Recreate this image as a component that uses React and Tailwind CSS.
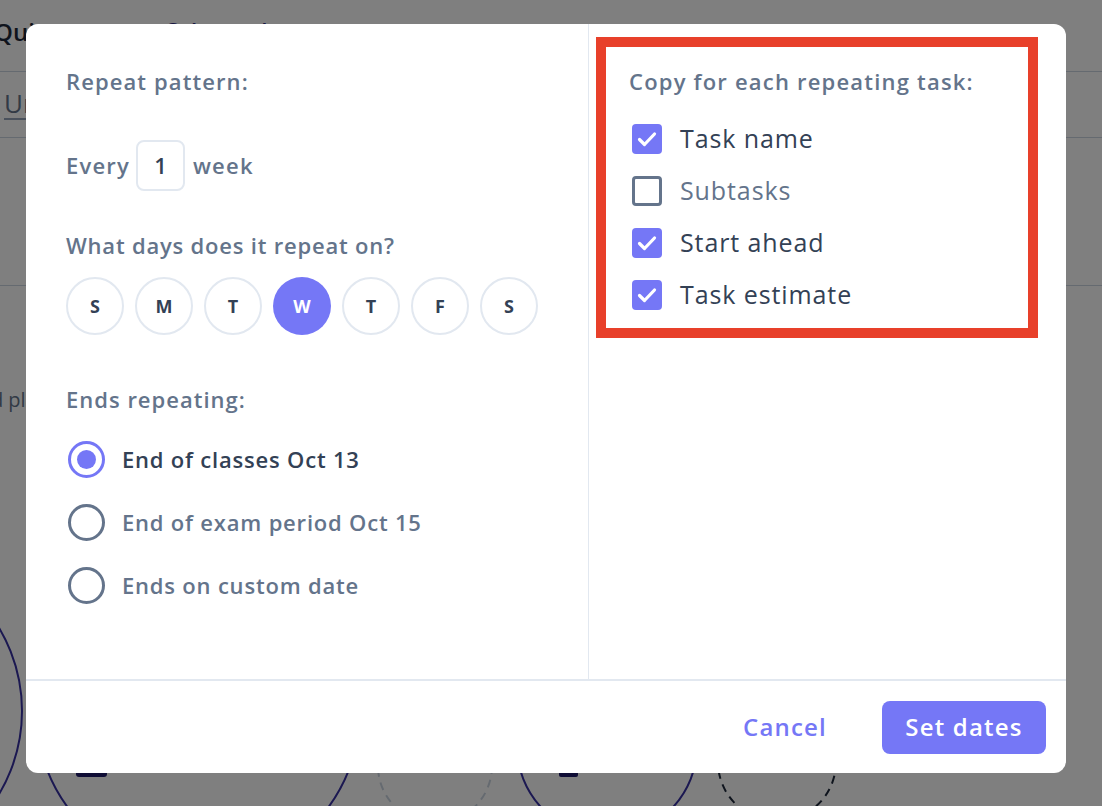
import { useState } from 'react';

const days = ['S', 'M', 'T', 'W', 'T', 'F', 'S'];

const endOptions = [
    { id: 'classes', label: 'End of classes Oct 13' },
    { id: 'exam', label: 'End of exam period Oct 15' },
    { id: 'custom', label: 'Ends on custom date' },
];

const copyOptions = [
    { id: 'name', label: 'Task name', checked: true },
    { id: 'subtasks', label: 'Subtasks', checked: false },
    { id: 'ahead', label: 'Start ahead', checked: true },
    { id: 'estimate', label: 'Task estimate', checked: true },
];

function BackgroundPage() {
    return (
        <div className="flex h-[806px] flex-col overflow-hidden bg-white text-[#1e293b]">
            <div className="flex h-[72px] shrink-0 items-start border-b border-[#cbd5e1] pt-[14px]">
                <span className="-ml-[6px] text-[24px] font-semibold">Quiz 1</span>
                <span className="ml-[100px] text-[22px] font-semibold text-[#312e81]">Select a date</span>
            </div>
            <div className="flex h-[66px] shrink-0 items-center border-b border-[#cbd5e1]">
                <span className="ml-[4px] border-b-2 border-[#94a3b8] pb-[2px] text-[26px] leading-none text-[#64748b]">Untitled</span>
            </div>
            <div className="h-[148px] shrink-0 border-b border-[#cbd5e1]" />
            <div className="mt-[99px] -ml-[34px] text-[20px] text-[#64748b]">Add planned time</div>
            <svg className="mt-auto shrink-0" width="1102" height="300" viewBox="0 506 1102 300" fill="none">
                <circle cx="-140" cy="711" r="162" stroke="#3730a3" strokeWidth="2" />
                <circle cx="198" cy="711" r="162" stroke="#3730a3" strokeWidth="2" />
                <circle cx="435" cy="766" r="57" stroke="#cbd5e1" strokeWidth="2" strokeDasharray="8 6" />
                <circle cx="607" cy="746" r="90" stroke="#3730a3" strokeWidth="2" />
                <circle cx="777" cy="762" r="59" stroke="#1e293b" strokeWidth="2" strokeDasharray="8 6" />
                <rect x="76" y="740" width="31" height="37" rx="3" fill="#1e1b6b" />
                <rect x="559" y="740" width="19" height="37" rx="2" fill="#1e1b6b" />
            </svg>
        </div>
    );
}

function CheckIcon() {
    return (
        <svg width="24" height="24" viewBox="0 0 24 24" fill="none" stroke="white" strokeWidth="3.2" strokeLinecap="round" strokeLinejoin="round">
            <polyline points="4.5 12.5 9.5 17.5 19.5 7" />
        </svg>
    );
}

export default function App() {
    const [selectedDay, setSelectedDay] = useState(3);
    const [ending, setEnding] = useState('classes');
    const [copy, setCopy] = useState(copyOptions);

    const toggleCopy = (id) => {
        setCopy((current) =>
            current.map((item) => (item.id === id ? { ...item, checked: !item.checked } : item)),
        );
    };

    return (
        <div className="relative h-[806px] w-full overflow-hidden" style={{ fontFamily: '"Open Sans", "Noto Sans", sans-serif' }}>
            <BackgroundPage />

            <div className="absolute inset-0 bg-black/50 pl-[26px] pt-[24px]">
                <div className="flex h-[749px] w-[1040px] flex-col overflow-hidden rounded-[12px] bg-white">
                    <div className="flex min-h-0 flex-1">
                        {/* left column */}
                        <div className="w-[563px] shrink-0 border-r border-[#e2e8f0] pl-[40px] pt-[43px]">
                            <p className="text-[22px] font-semibold leading-[28px] tracking-[1.1px] text-[#64748b]">Repeat pattern:</p>

                            <div className="mt-[45px] flex items-center text-[22px] font-semibold tracking-[1.2px] text-[#64748b]">
                                <span>Every</span>
                                <span className="ml-[6px] flex h-[51px] w-[49px] items-center justify-center rounded-[8px] border-2 border-[#e2e8f0] text-[22px] tracking-normal text-[#334155]">
                                    1
                                </span>
                                <span className="ml-[8px]">week</span>
                            </div>

                            <p className="mt-[40px] text-[22px] font-semibold leading-[28px] tracking-[0.8px] text-[#64748b]">What days does it repeat on?</p>

                            <div className="mt-[18px] flex gap-[11px]">
                                {days.map((day, index) => (
                                    <button
                                        key={index}
                                        type="button"
                                        onClick={() => setSelectedDay(index)}
                                        className={`flex h-[58px] w-[58px] items-center justify-center rounded-full text-[18px] font-bold ${
                                            selectedDay === index
                                                ? 'bg-[#7577f6] text-white'
                                                : 'border-2 border-[#e2e8f0] text-[#334155]'
                                        }`}
                                    >
                                        {day}
                                    </button>
                                ))}
                            </div>

                            <p className="mt-[50px] text-[22px] font-semibold leading-[28px] tracking-[1px] text-[#64748b]">Ends repeating:</p>

                            <div className="mt-[28px] flex flex-col gap-[27px]">
                                {endOptions.map((option) => {
                                    const active = ending === option.id;
                                    return (
                                        <button
                                            key={option.id}
                                            type="button"
                                            onClick={() => setEnding(option.id)}
                                            className="flex h-[36px] items-center text-left"
                                        >
                                            <span
                                                className={`ml-[2px] flex h-[37px] w-[37px] shrink-0 items-center justify-center rounded-full border-[3px] ${
                                                    active ? 'border-[#7577f6]' : 'border-[#64748b]'
                                                }`}
                                            >
                                                {active && <span className="h-[19px] w-[19px] rounded-full bg-[#7577f6]" />}
                                            </span>
                                            <span
                                                className={`ml-[17px] text-[22px] font-semibold tracking-[0.8px] ${
                                                    active ? 'text-[#334155]' : 'text-[#64748b]'
                                                }`}
                                            >
                                                {option.label}
                                            </span>
                                        </button>
                                    );
                                })}
                            </div>
                        </div>

                        {/* right column */}
                        <div className="flex-1 pl-[7px] pt-[13px]">
                            <div className="w-[442px] border-[10px] border-[#e8402a] pb-[18px] pl-[23px] pt-[20px]">
                                <p className="text-[22px] font-semibold leading-[28px] tracking-[1.2px] text-[#64748b]">Copy for each repeating task:</p>
                                <div className="mt-[29px] flex flex-col gap-[22px]">
                                    {copy.map((item) => (
                                        <button
                                            key={item.id}
                                            type="button"
                                            onClick={() => toggleCopy(item.id)}
                                            className="flex h-[30px] items-center text-left"
                                        >
                                            <span
                                                className={`ml-[3px] flex h-[30px] w-[30px] shrink-0 items-center justify-center rounded-[4px] ${
                                                    item.checked ? 'bg-[#7577f6]' : 'border-[3px] border-[#64748b]'
                                                }`}
                                            >
                                                {item.checked && <CheckIcon />}
                                            </span>
                                            <span
                                                className={`ml-[18px] text-[25px] font-medium tracking-[0.9px] ${
                                                    item.checked ? 'text-[#334155]' : 'text-[#64748b]'
                                                }`}
                                            >
                                                {item.label}
                                            </span>
                                        </button>
                                    ))}
                                </div>
                            </div>
                        </div>
                    </div>

                    {/* footer */}
                    <div className="flex h-[94px] shrink-0 items-center justify-end gap-[55px] border-t-2 border-[#e2e8f0] pr-[20px]">
                        <button type="button" className="text-[24px] font-semibold tracking-[1.2px] text-[#7577f6]">
                            Cancel
                        </button>
                        <button type="button" className="h-[53px] w-[164px] rounded-[8px] bg-[#7577f6] text-[24px] font-semibold tracking-[1.2px] text-white">
                            Set dates
                        </button>
                    </div>
                </div>
            </div>
        </div>
    );
}
